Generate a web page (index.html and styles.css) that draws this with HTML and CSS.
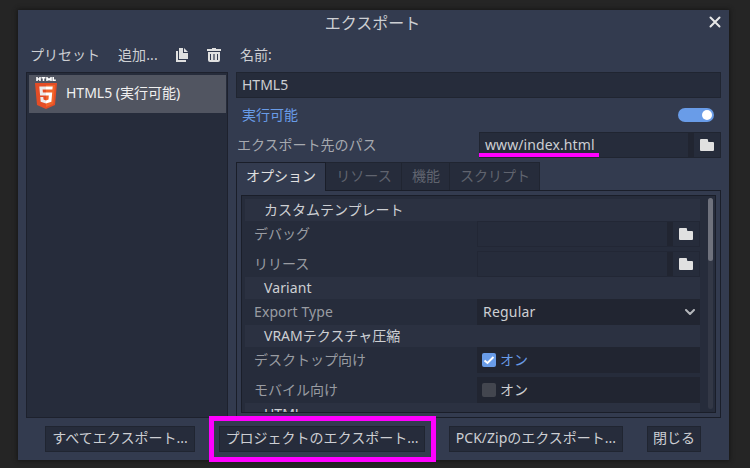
FILE: index.html
```html
<!DOCTYPE html>
<html lang="ja">
<head>
<meta charset="utf-8">
<title>エクスポート</title>
<link rel="stylesheet" href="styles.css">
</head>
<body>
<svg width="0" height="0" class="defs">
  <symbol id="folder" viewBox="0 0 14 12"><path d="M1 0h6q1 0 1 1v1q0 1 1 1h4q1 0 1 1v7q0 1-1 1H1q-1 0-1-1V1q0-1 1-1z"/></symbol>
</svg>
<main class="dialog">
  <header class="titlebar">
    <h1>エクスポート</h1>
    <svg class="close" width="12" height="12" viewBox="0 0 12 12"><path d="M1.500 1.500l9 9M10.500 1.500l-9 9"/></svg>
  </header>
  <div class="body">
    <section class="presets">
      <div class="toolbar">
        <span class="label">プリセット</span>
        <span class="add">追加...</span>
        <svg class="copy" width="12" height="14" viewBox="0 0 12 14"><path d="M3 0h4v5h5v6H3zM8 0l4 4H8zM0 3h2v9h8v2H0z"/></svg>
        <svg class="trash" width="14" height="14" viewBox="0 0 14 14"><path fill-rule="evenodd" d="M5 0h4v1h5v2H0V1h5zM1 4h12v8q0 2-2 2H3q-2 0-2-2zM3 6v6h1V6zM6 6v6h0.600V6zM7.400 6v6H8V6zM10 6v6h1V6z"/></svg>
      </div>
      <div class="tree">
        <div class="item">
          <svg class="html5" width="22" height="32" viewBox="0 0 22 32">
            <path class="mark" d="M2 0v4M5 0v4M2 2h3M6.500 .800h4M8.500 .800V4M12 4V.800l2 2 2-2V4M18.200 0v3.200h2.600"/>
            <path fill="#e44d26" d="M0 6h22l-2 22-9 4-9-4z"/>
            <path fill="#f16529" d="M11 8h9l-1.700 19-7.300 3z"/>
            <path fill="#ebebeb" d="M4.300 9.500H11v3H7.600l.3 3H11v3H5.100zM5.300 20h3l.2 2.500 2.500.9v3.200l-5.300-1.900z"/>
            <path fill="#fff" d="M11 9.500h6.700l-.3 3H11zM11 15.500h6.200l-.8 9.200-5.400 1.900v-3.200l2.500-.9.300-4H11z"/>
          </svg>
          <span>HTML5 (実行可能)</span>
        </div>
      </div>
    </section>
    <section class="settings">
      <div class="name-label">名前:</div>
      <div class="input name">HTML5</div>
      <div class="runnable"><span>実行可能</span><i class="switch"></i></div>
      <div class="path-row">
        <span class="path-label">エクスポート先のパス</span>
        <div class="file path"><div class="value"><span class="latin">www/index.html</span></div><div class="browse"><svg width="14" height="12"><use href="#folder"/></svg></div><i class="underline"></i></div>
      </div>
      <nav class="tabs">
        <div class="tab active">オプション</div>
        <div class="tab resources">リソース</div>
        <div class="tab features">機能</div>
        <div class="tab script">スクリプト</div>
      </nav>
      <div class="pane">
        <div class="inspector">
          <div class="props">
            <div class="group">カスタムテンプレート</div>
            <div class="prop"><span>デバッグ</span><div class="file"><div class="value"></div><div class="browse"><svg width="14" height="12"><use href="#folder"/></svg></div></div></div>
            <div class="prop gap"><span>リリース</span><div class="file"><div class="value"></div><div class="browse"><svg width="14" height="12"><use href="#folder"/></svg></div></div></div>
            <div class="group"><span class="latin">Variant</span></div>
            <div class="prop"><span class="latin">Export Type</span><div class="select">Regular<svg width="10" height="6" viewBox="0 0 10 6"><path d="M1 1l4 4 4-4"/></svg></div></div>
            <div class="group">VRAMテクスチャ圧縮</div>
            <div class="prop"><span>デスクトップ向け</span><div class="check on"><svg width="14" height="14" viewBox="0 0 14 14"><rect width="14" height="14" rx="2"/><path d="M2.500 7.500L5.500 10 11.500 4"/></svg>オン</div></div>
            <div class="prop gap"><span>モバイル向け</span><div class="check"><svg width="14" height="14" viewBox="0 0 14 14"><rect width="14" height="14" rx="2"/></svg>オン</div></div>
            <div class="group">HTML</div>
          </div>
          <div class="scroll"><i></i></div>
        </div>
      </div>
    </section>
  </div>
  <footer class="actions">
    <div class="button all">すべてエクスポート...</div>
    <div class="button project">プロジェクトのエクスポート...<i class="highlight"></i></div>
    <div class="button pck">PCK/Zipのエクスポート...</div>
    <div class="button dismiss">閉じる</div>
  </footer>
</main>
</body>
</html>
```
FILE: styles.css
```css
* { box-sizing: border-box; }
body {
  margin: 0;
  width: 750px;
  height: 468px;
  overflow: hidden;
  padding: 10px 21px 8px 18px;
  background: #252525;
  color: #cdcfd3;
  font: 14px/20px "Noto Sans", "Noto Sans CJK JP", sans-serif;
  white-space: nowrap;
}
.defs { position: absolute; }
svg { display: block; flex: none; fill: #e0e0e0; }
.dialog {
  height: 450px;
  padding: 0 8px;
  background: #333b4f;
  box-shadow: 0 0 4px 1px #171717;
}
.titlebar { height: 34px; display: flex; justify-content: center; position: relative; }
h1 { margin: 1px 2px 0 0; font-size: 16px; line-height: 25px; font-weight: 400; }
.close { position: absolute; right: 0; top: 6px; fill: none; stroke: #e8e8e8; stroke-width: 2; stroke-linecap: round; }
.body { display: flex; gap: 8px; height: 374px; }
.presets { width: 202px; }
.toolbar { height: 28px; display: flex; align-items: center; padding: 0 7px 6px 4px; }
.label { width: 88px; }
.add { width: 58px; letter-spacing: 0.1px; }
.copy { margin-right: 19px; }
.tree { height: 346px; border: 1px solid #1d212d; background: #262c3b; padding: 2px 1px 0 2px; }
.item { height: 38px; display: flex; align-items: center; gap: 9px; padding-left: 6px; background: #515561; color: #f0f0f0; }
.item span { padding-bottom: 2px; }
.html5 { margin-top: -2px; }
.mark { fill: none; stroke: #fff; stroke-width: 1.6; }
.settings { width: 485px; }
.name-label { height: 28px; padding: 1px 0 0 4px; }
.input { height: 26px; padding: 2px 5px; border: 1px solid #202531; background: #262c3b; }
.runnable { height: 34px; display: flex; align-items: center; justify-content: space-between; padding: 0 7px 0 6px; color: #699ce8; }
.switch { width: 36px; height: 14px; border-radius: 7px; background: #699ce8; display: flex; align-items: center; justify-content: flex-end; padding-right: 2px; }
.switch::after { content: ""; width: 10px; height: 10px; border-radius: 50%; background: #fff; }
.path-row { display: flex; height: 26px; align-items: center; justify-content: space-between; }
.path-label { padding-left: 1px; color: #a6a9af; }
.latin { letter-spacing: 0.1px; }
.file { position: relative; height: 26px; width: 223px; display: flex; border: 1px solid #202531; background: #262c3b; }
.value { flex: 1; border-right: 6px solid #212531; padding: 2px 5px; }
.browse { width: 26px; display: grid; place-items: center; }
.path { width: 242px; }
.underline { position: absolute; left: -1px; bottom: 0; width: 120px; height: 4px; background: #f0f; }
.tabs { display: flex; height: 28px; margin-top: 4px; }
.tab { height: 28px; padding: 3px 0 0 1px; text-align: center; background: #262c3b; border: 1px solid #202531; border-left-width: 0; border-bottom: 0; color: #60646f; }
.tab.active { width: 90px; height: 29px; padding-left: 0; position: relative; background: #333b4f; border: 1px solid #1a1e29; border-bottom: 0; color: #e0e0e0; }
.resources { width: 76px; }
.features { width: 48px; }
.script { width: 90px; }
.pane { height: 228px; padding: 4px; border: 1px solid #1a1e29; }
.inspector { height: 218px; display: flex; justify-content: space-between; padding: 3px 2px 0 3px; border: 1px solid #1a1e29; background: #262c3b; overflow: hidden; }
.props { width: 455px; height: 213px; overflow: hidden; }
.group { height: 22px; line-height: 21px; padding-left: 19px; background: #2b3141; }
.prop { height: 26px; display: flex; align-items: center; justify-content: space-between; padding-left: 9px; color: #999ca2; }
.prop.gap { margin-top: 4px; }
.prop .file { border-color: #222735; }
.select, .check { width: 223px; height: 26px; display: flex; align-items: center; background: #212531; color: #cdcfd3; }
.select { padding: 0 5px 0 6px; justify-content: space-between; letter-spacing: 0.2px; }
.select path { fill: none; stroke: #b4b6ba; stroke-width: 2; stroke-linecap: round; stroke-linejoin: round; }
.check { padding-left: 5px; gap: 4px; }
.check svg { fill: #43464f; }
.check.on { color: #699ce8; }
.check.on svg { fill: #699ce8; }
.check path { fill: none; stroke: #fff; stroke-width: 2; }
.scroll { width: 5px; height: 211px; margin-top: -1px; border-radius: 3px; background: #333846; }
.scroll i { display: block; height: 63px; border-radius: 3px; background: #6f727d; }
.actions { display: flex; padding: 8px 0 0 19px; gap: 24px; }
.button { position: relative; height: 26px; line-height: 22px; border: 1px solid #202531; background: #262c3b; text-align: center; }
.all { width: 150px; }
.project { width: 206px; }
.pck { width: 174px; }
.dismiss { width: 54px; }
.highlight { position: absolute; left: -11px; top: -11px; width: 227px; height: 46px; border: 5px solid #f0f; }
```
